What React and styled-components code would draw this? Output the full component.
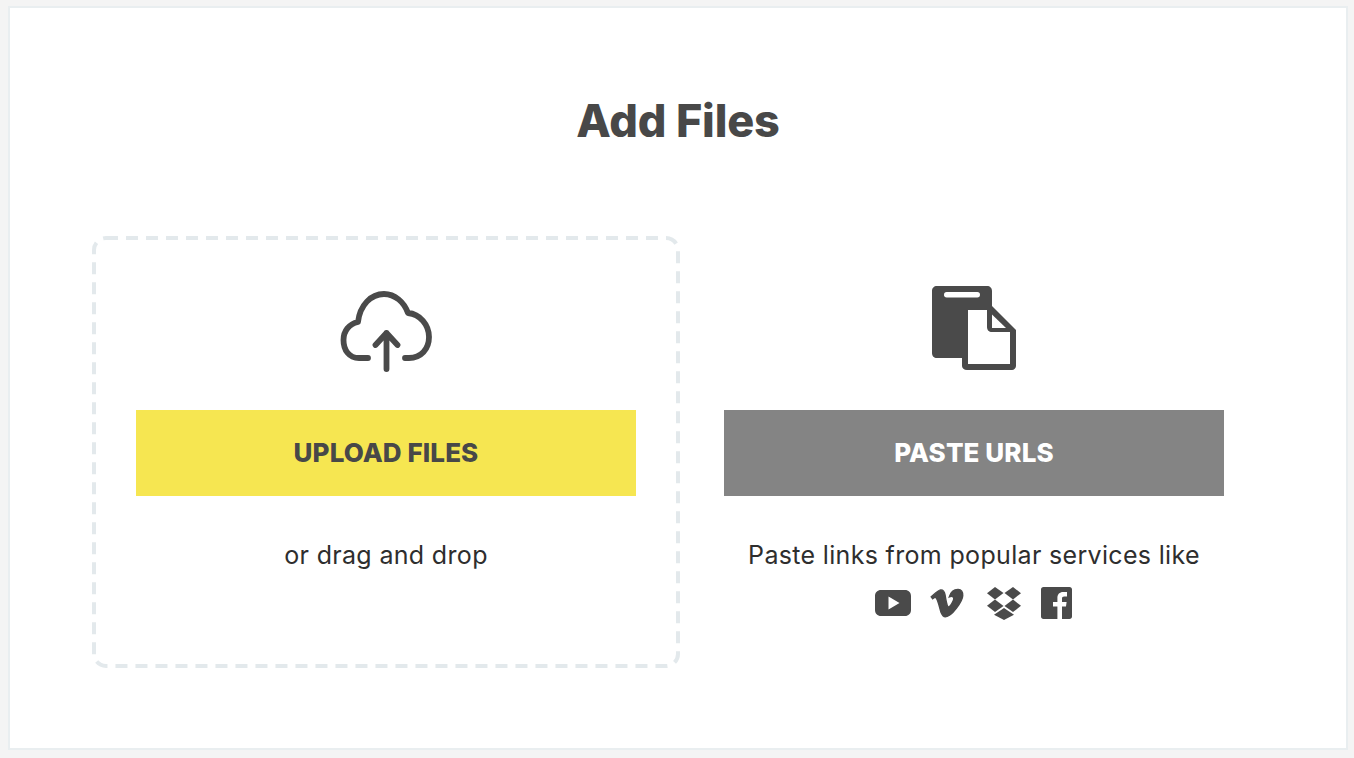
import React from "react";
import styled, { createGlobalStyle } from "styled-components";
import { FaVimeoV } from "react-icons/fa";

const GlobalStyle = createGlobalStyle`
  html, body {
    margin: 0;
    background: #f4f4f4;
  }
  body {
    font-family: "Inter", "Liberation Sans", sans-serif;
  }
`;

const Page = styled.div`
  box-sizing: border-box;
  height: 758px;
  padding: 6px 6px 8px 8px;
`;

const Panel = styled.main`
  box-sizing: border-box;
  height: 744px;
  background: #fff;
  border: 2px solid #e9eef0;
  padding: 0 77px 0 82px;
`;

const Title = styled.h1`
  margin: 0;
  padding: 85px 5px 0 0;
  height: 228px;
  box-sizing: border-box;
  font-size: 45px;
  line-height: 56px;
  font-weight: 800;
  letter-spacing: -0.2px;
  color: #484848;
  text-align: center;
`;

const Columns = styled.div`
  display: grid;
  grid-template-columns: 588px 588px;
`;

const Column = styled.section`
  position: relative;
  box-sizing: border-box;
  height: 432px;
  padding-top: 45px;
  display: flex;
  flex-direction: column;
  align-items: center;
`;

const DashedOutline = styled.svg`
  position: absolute;
  inset: 0;
  width: 588px;
  height: 432px;
  fill: none;
  stroke: #e3e9ec;
  stroke-width: 4;
  stroke-dasharray: 12 8;
`;

const IconSlot = styled.div`
  width: 130px;
  height: 120px;
  margin-top: -11px;
  margin-bottom: 20px;
  color: #4a4a4a;
  svg {
    display: block;
  }
`;

const ActionButton = styled.button`
  width: 500px;
  height: 86px;
  flex: none;
  border: 0;
  padding: 0 0 2px;
  background: ${(p) => (p.$primary ? "#f6e651" : "#848484")};
  color: ${(p) => (p.$primary ? "#484848" : "#fff")};
  font-family: inherit;
  font-size: 26px;
  font-weight: 800;
  letter-spacing: 0.1px;
  text-transform: uppercase;
`;

const Note = styled.p`
  margin: 43px 0 0;
  font-size: 25px;
  line-height: 32px;
  letter-spacing: 0.33px;
  color: #2e2e2e;
`;

const Services = styled.div`
  display: flex;
  align-items: center;
  gap: 20px;
  margin: 14px 1px 0 0;
  color: #4a4a4a;
  svg {
    display: block;
  }
`;

const VimeoIcon = styled(FaVimeoV)`
  margin: 0 2px 0 -2px;
`;

const CloudIcon = () => (
  <svg width="130" height="120" viewBox="0 0 130 120" fill="none" stroke="currentColor" strokeWidth="5.8" strokeLinecap="round" strokeLinejoin="round">
    <path d="M47 88H38C28 88 22.500 80 22.500 70C22.500 61 28 54 37 52C39 35 50 24 63 24C74 24 83 32 87 43C99 44 108 55 108 67C108 79 100 88 88 88H84" />
    <path d="M65.500 99V63M54.500 75L65.500 63L76.500 75" />
  </svg>
);

const DocsIcon = () => (
  <svg width="130" height="120" viewBox="-6 0 130 120">
    <path fill="currentColor" d="M22 16H72C75 16 77 18 77 21V36L101 60V96C101 98 99 100 97 100H52C49 100 47 98 47 96V88H22C19 88 17 86 17 83V21C17 18 19 16 22 16Z" />
    <rect x="29" y="22" width="36" height="5.5" rx="2.7" fill="#fff" />
    <path fill="#fff" d="M53 40H72V57C72 60 74 62 77 62H95V94H53Z" />
    <path fill="#fff" d="M77 44.500L91 58H77Z" />
  </svg>
);

const YoutubeIcon = () => (
  <svg width="36" height="26" viewBox="0 0 36 26">
    <path fill="currentColor" fillRule="evenodd" d="M6 0H30C33.5 0 36 2.5 36 6V20C36 23.5 33.5 26 30 26H6C2.5 26 0 23.5 0 20V6C0 2.5 2.5 0 6 0ZM13.5 6.5V19.5L24.5 13Z" />
  </svg>
);

const DropboxIcon = () => (
  <svg width="34" height="33" viewBox="0 0 34 33" fill="currentColor">
    <path d="M8 0L16.5 6L8 12.4L0 6.2Z" />
    <path d="M26 0L34 6.2L26 12.4L17.5 6Z" />
    <path d="M8 12.6L16.5 19L8 25L0 18.8Z" />
    <path d="M26 12.6L34 18.8L26 25L17.5 19Z" />
    <path d="M17 21L27 27.7L17 33L7 27.7Z" />
  </svg>
);

const FacebookIcon = () => (
  <svg width="31" height="32" viewBox="0 0 31 32">
    <path fill="currentColor" d="M2.5 0H28.5C30 0 31 1 31 2.5V29.5C31 31 30 32 28.5 32H21V19.5H25L25.6 15H21V11.5C21 10.2 21.6 9.4 23.2 9.4H26V5H22.2C18.6 5 16.4 7.2 16.4 11V15H12V19.5H16.4V32H2.5C1 32 0 31 0 29.5V2.5C0 1 1 0 2.5 0Z" />
  </svg>
);

export default function App() {
  return (
    <Page>
      <GlobalStyle />
      <Panel>
        <Title>Add Files</Title>
        <Columns>
          <Column>
            <DashedOutline viewBox="0 0 588 432">
              <rect x="2" y="2" width="584" height="428" rx="12" />
            </DashedOutline>
            <IconSlot>
              <CloudIcon />
            </IconSlot>
            <ActionButton $primary>Upload Files</ActionButton>
            <Note>or drag and drop</Note>
          </Column>
          <Column>
            <IconSlot>
              <DocsIcon />
            </IconSlot>
            <ActionButton>Paste URLs</ActionButton>
            <Note>Paste links from popular services like</Note>
            <Services>
              <YoutubeIcon />
              <VimeoIcon size={36} stroke="currentColor" strokeWidth={20} />
              <DropboxIcon />
              <FacebookIcon />
            </Services>
          </Column>
        </Columns>
      </Panel>
    </Page>
  );
}
